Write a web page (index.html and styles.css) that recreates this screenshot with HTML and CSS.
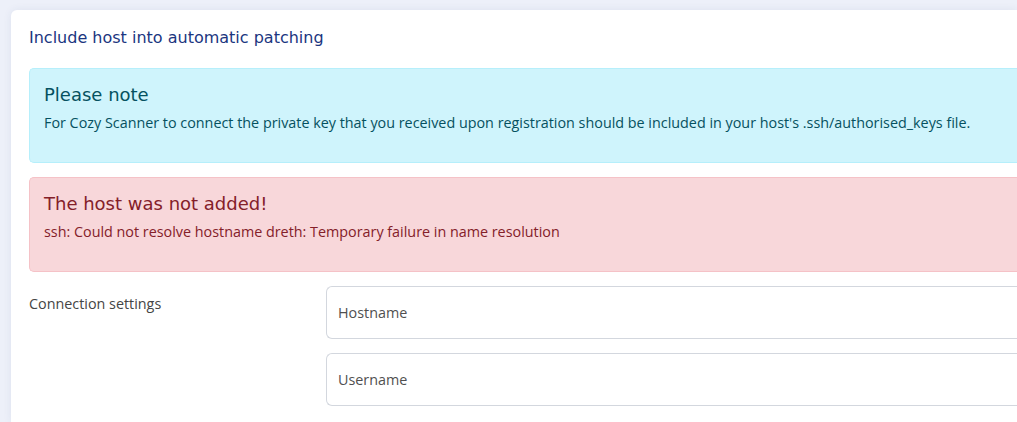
FILE: index.html
```html
<!DOCTYPE html>
<html>
<head>
<meta charset="utf-8">
<link rel="stylesheet" href="styles.css">
</head>
<body>
<div class="card">
  <h2 class="card-title">Include host into automatic patching</h2>
  <div class="alert alert-info">
    <h4 class="alert-heading">Please note</h4>
    <p class="alert-text">For Cozy Scanner to connect the private key that you received upon registration should be included in your host's .ssh/authorised_keys file.</p>
  </div>
  <div class="alert alert-danger">
    <h4 class="alert-heading">The host was not added!</h4>
    <p class="alert-text">ssh: Could not resolve hostname dreth: Temporary failure in name resolution</p>
  </div>
  <div class="form-row">
    <label class="form-label">Connection settings</label>
    <div class="form-fields">
      <input class="form-input" type="text" placeholder="Hostname">
      <input class="form-input" type="text" placeholder="Username">
    </div>
  </div>
</div>
</body>
</html>
```
FILE: styles.css
```css
html, body {
  margin: 0;
  padding: 0;
  overflow: hidden;
}
body {
  background: #edf0f9;
  height: 422px;
  font-family: "Open Sans", "DejaVu Sans", sans-serif;
}
.card {
  margin: 10px 0 0 11px;
  width: 1006px;
  height: 412px;
  overflow: hidden;
  background: #fff;
  border-radius: 6px 0 0 0;
  box-shadow: 0 0 8px rgba(40, 60, 120, 0.08);
  padding: 18px 0 0 18px;
  box-sizing: border-box;
}
.card-title {
  font-family: "DejaVu Sans", sans-serif;
  font-weight: normal;
  font-size: 16px;
  line-height: 20px;
  color: #1b3680;
  margin: 0 0 20px 0;
}
.alert {
  border: 1px solid;
  border-right: none;
  border-radius: 5px 0 0 5px;
  padding: 15px 14px 29px 14px;
  margin-bottom: 14px;
}
.alert-info {
  background: #cff4fc;
  border-color: #b6effb;
  color: #055160;
}
.alert-danger {
  background: #f8d7da;
  border-color: #f5c2c7;
  color: #842029;
}
.alert-heading {
  font-family: "DejaVu Sans", sans-serif;
  font-weight: normal;
  font-size: 18px;
  line-height: 22px;
  margin: 0 0 7px 0;
}
.alert-text {
  font-size: 14.35px;
  line-height: 20px;
  margin: 0;
  white-space: nowrap;
}
.form-row {
  display: flex;
}
.form-label {
  width: 297px;
  flex: none;
  font-size: 14.35px;
  color: #454545;
  padding-top: 8px;
  line-height: 20px;
}
.form-fields {
  display: flex;
  flex-direction: column;
  gap: 14px;
  flex: 1;
}
.form-input {
  height: 53px;
  box-sizing: border-box;
  border: 1px solid #d3d7de;
  border-right: none;
  border-radius: 6px 0 0 6px;
  padding: 0 11px;
  font-family: "Open Sans", sans-serif;
  font-size: 14.35px;
  color: #444;
  background: #fff;
  outline: none;
}
.form-input::placeholder {
  color: #505050;
  opacity: 1;
}
```
